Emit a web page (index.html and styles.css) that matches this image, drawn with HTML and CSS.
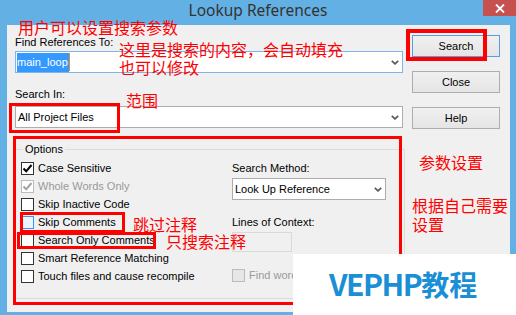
FILE: index.html
```html
<!DOCTYPE html>
<html>
<head>
<meta charset="utf-8">
<link rel="stylesheet" href="styles.css">
</head>
<body class="page">
<div class="window">
  <div class="titlebar">
    <span class="title">Lookup References</span>
    <div class="close-btn">
      <svg class="close-x" width="10" height="9" viewBox="0 0 10 9"><path d="M1 0.5 L9 8.5 M9 0.5 L1 8.5" stroke="#fff" stroke-width="1.8" fill="none"/></svg>
    </div>
  </div>
  <div class="client">
    <div class="top">
      <div class="left">
        <span class="lbl">Find References To:</span>
        <div class="combo combo-focus">
          <span class="sel">main_loop</span><span class="caret"></span>
          <svg class="arrow" width="8" height="5" viewBox="0 0 8 5"><path d="M0.8 0.8 L4 3.8 L7.2 0.8" stroke="#5a5a5a" stroke-width="1.8" fill="none"/></svg>
        </div>
        <span class="lbl lbl-in">Search In:</span>
        <div class="combo combo-in">
          <span class="ctext">All Project Files</span>
          <svg class="arrow" width="8" height="5" viewBox="0 0 8 5"><path d="M0.8 0.8 L4 3.8 L7.2 0.8" stroke="#5a5a5a" stroke-width="1.8" fill="none"/></svg>
        </div>
      </div>
      <div class="buttons">
        <div class="btn btn-default">Search</div>
        <div class="btn">Close</div>
        <div class="btn">Help</div>
      </div>
    </div>
    <div class="group">
      <span class="legend">Options</span>
      <div class="checks">
        <div class="row"><span class="cb"><svg width="11" height="11" viewBox="0 0 11 11"><path d="M1.5 5.5 L4.2 8.3 L9.5 2" stroke="#000" stroke-width="2" fill="none"/></svg></span>Case Sensitive</div>
        <div class="row row-dis"><span class="cb cb-dis"><svg width="11" height="11" viewBox="0 0 11 11"><path d="M1.5 5.5 L4.2 8.3 L9.5 2" stroke="#a3a3a3" stroke-width="2" fill="none"/></svg></span>Whole Words Only</div>
        <div class="row"><span class="cb"></span>Skip Inactive Code</div>
        <div class="row"><span class="cb cb-hot"></span>Skip Comments</div>
        <div class="row"><span class="cb"></span>Search Only Comments</div>
        <div class="row"><span class="cb"></span>Smart Reference Matching</div>
        <div class="row"><span class="cb"></span>Touch files and cause recompile</div>
      </div>
      <div class="side">
        <span class="slbl">Search Method:</span>
        <div class="combo scombo">
          <span class="ctext">Look Up Reference</span>
          <svg class="arrow" width="8" height="5" viewBox="0 0 8 5"><path d="M0.8 0.8 L4 3.8 L7.2 0.8" stroke="#5a5a5a" stroke-width="1.8" fill="none"/></svg>
        </div>
        <span class="slbl slbl-ctx">Lines of Context:</span>
        <div class="ctx"></div>
        <div class="row row-dis row-find"><span class="cb cb-off"></span>Find word...</div>
      </div>
    </div>
  </div>
</div>

<div class="mark mark-search"></div>
<div class="mark mark-in"></div>
<div class="mark mark-opts"></div>
<div class="mark mark-skip"></div>
<div class="mark mark-only"></div>

<div class="note note1">用户可以设置搜索参数</div>
<div class="note note2">这里是搜索的内容，会自动填充<br>也可以修改</div>
<div class="note note3">范围</div>
<div class="note note4">参数设置</div>
<div class="note note5">根据自己需要<br>设置</div>
<div class="note note6">跳过注释</div>
<div class="note note7">只搜索注释</div>

<div class="wm"><span class="wm-text"><span class="wm-latin">VEPHP</span>教程</span></div>
</body>
</html>
```

FILE: styles.css
```css
.page {
  margin: 0;
  width: 516px;
  height: 315px;
  overflow: hidden;
  position: relative;
  background: #63b1e4;
  font-family: "Liberation Sans", Arial, sans-serif;
  font-size: 11px;
  color: #000;
}
.window {
  width: 516px;
  height: 315px;
  display: flex;
  flex-direction: column;
}
.titlebar {
  height: 25px;
  position: relative;
  display: flex;
  justify-content: center;
  flex: none;
}
.title {
  font-family: "Noto Sans", sans-serif;
  font-size: 15.5px;
  line-height: 20px;
  color: #333;
}
.close-btn {
  position: absolute;
  right: 0;
  top: 0;
  width: 33px;
  height: 16px;
  background: #c75050;
  display: flex;
  align-items: center;
  justify-content: center;
}
.client {
  margin: 0 6px 0 7px;
  height: 287px;
  background: #f0f0f0;
  padding-left: 8px;
  box-sizing: border-box;
}
.top {
  display: flex;
  gap: 9px;
}
.left {
  width: 388px;
  padding-top: 11px;
  display: flex;
  flex-direction: column;
}
.lbl {
  display: block;
  line-height: 13px;
  height: 13px;
}
.lbl-in {
  margin-top: 15px;
}
.combo {
  height: 22px;
  margin-top: 2px;
  box-sizing: border-box;
  border: 1px solid #abadb3;
  background: #fff;
  display: flex;
  align-items: center;
  padding-left: 2px;
  position: relative;
}
.combo-focus {
  border-color: #7eb4ea;
  align-items: flex-start;
  padding-left: 1px;
}
.combo-in {
  margin-top: 5px;
}
.sel {
  margin-top: 1px;
  background: #3399ff;
  color: #fff;
  height: 19px;
  line-height: 19px;
  padding-right: 1px;
}
.caret {
  margin-top: 1px;
  width: 1px;
  height: 18px;
  background: #e08a2c;
}
.ctext {
  line-height: 13px;
}
.arrow {
  position: absolute;
  right: 3px;
  top: 8px;
}
.buttons {
  width: 88px;
  padding-top: 10px;
  display: flex;
  flex-direction: column;
  gap: 14px;
}
.btn {
  height: 22px;
  box-sizing: border-box;
  border: 1px solid #adadad;
  background: linear-gradient(#f0f0f0, #e5e5e5);
  display: flex;
  align-items: center;
  justify-content: center;
  line-height: 13px;
}
.btn-default {
  border-color: #569de5;
}
.group {
  position: relative;
  margin-top: 20px;
  width: 390px;
  height: 150px;
  box-sizing: border-box;
  border: 1px solid #dcdcdc;
  padding: 9px 0 0 5px;
  display: grid;
  grid-template-columns: 211px 154px;
  align-content: start;
}
.legend {
  position: absolute;
  top: -7px;
  left: 7px;
  padding: 0 2px;
  background: #f0f0f0;
  line-height: 13px;
}
.checks {
  display: flex;
  flex-direction: column;
}
.row {
  display: flex;
  height: 18px;
  line-height: 18px;
  white-space: nowrap;
}
.row-dis {
  color: #999;
}
.cb {
  flex: none;
  width: 13px;
  height: 13px;
  box-sizing: border-box;
  margin-top: 3px;
  margin-right: 4px;
  border: 1px solid #333;
  background: #fff;
  display: flex;
}
.cb-dis {
  border-color: #bcbcbc;
}
.cb-hot {
  border-color: #3399ff;
  background: #eaf4ff;
}
.cb-off {
  border-color: #bcbcbc;
  background: #e6e6e6;
}
.side {
  display: flex;
  flex-direction: column;
}
.slbl {
  display: block;
  line-height: 18px;
  height: 18px;
}
.scombo {
  margin-top: 1px;
  width: 154px;
  border-color: #acacac;
}
.slbl-ctx {
  margin-top: 13px;
}
.ctx {
  margin-top: 1px;
  width: 60px;
  height: 20px;
  box-sizing: border-box;
  border: 1px solid #d9d9d9;
  background: #f0f0f0;
}
.row-find {
  margin-top: 14px;
}
.mark {
  position: absolute;
  box-sizing: border-box;
  border: 3px solid #ff0000;
}
.mark-search {
  left: 406px;
  top: 29px;
  width: 81px;
  height: 32px;
  border-width: 4px;
}
.mark-in {
  left: 9px;
  top: 103px;
  width: 111px;
  height: 30px;
}
.mark-opts {
  left: 13px;
  top: 136px;
  width: 389px;
  height: 169px;
}
.mark-skip {
  left: 20px;
  top: 212px;
  width: 105px;
  height: 21px;
}
.mark-only {
  left: 17px;
  top: 232px;
  width: 139px;
  height: 17px;
}
.note {
  position: absolute;
  font-family: "Noto Sans CJK SC", sans-serif;
  font-size: 16px;
  line-height: 16px;
  color: #ff0000;
  white-space: nowrap;
}
.note1 { left: 18px; top: 19px; }
.note2 { left: 119px; top: 40px; line-height: 18px; }
.note3 { left: 126px; top: 92px; }
.note4 { left: 419px; top: 154px; }
.note5 { left: 412px; top: 196px; line-height: 19px; }
.note6 { left: 133px; top: 216px; }
.note7 { left: 166px; top: 233px; }
.wm {
  position: absolute;
  left: 293px;
  top: 254px;
  right: 0;
  bottom: 0;
  background: #fff;
  padding-left: 36px;
  padding-bottom: 2px;
  display: flex;
  align-items: center;
}
.wm-text {
  font-family: "Noto Sans CJK SC", sans-serif;
  font-weight: bold;
  font-size: 28px;
  line-height: 34px;
  color: #1b8fd5;
  white-space: nowrap;
}
.wm-latin {
  font-size: 30px;
  letter-spacing: -1.5px;
}
```
